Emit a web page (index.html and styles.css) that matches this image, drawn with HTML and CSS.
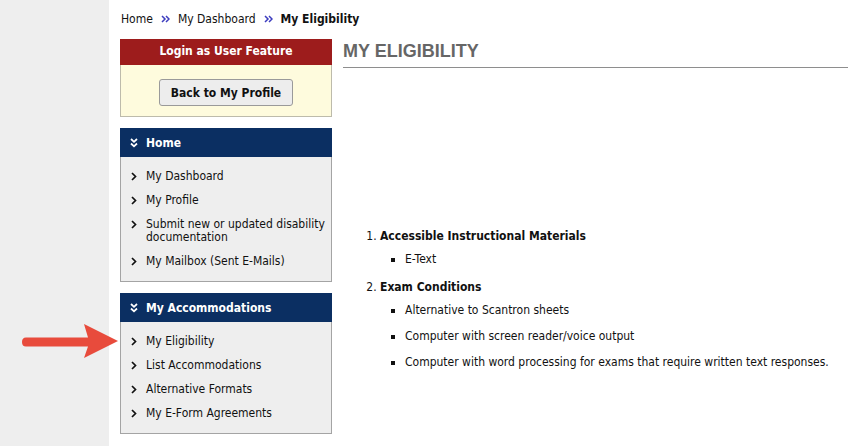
FILE: index.html
```html
<!DOCTYPE html>
<html>
<head>
<meta charset="utf-8">
<link rel="stylesheet" href="styles.css">
</head>
<body>
<div class="page">
  <div class="strip">
    <svg class="pointer" width="100" height="36" viewBox="0 0 100 36">
      <path d="M4 14.5 L66 14.5 L62 1 L96 18 L62 35 L66 23.5 L4 23.5 Q0 23.5 0 19 Q0 14.5 4 14.5 Z" fill="#e84b3c"/>
    </svg>
  </div>
  <div class="content">
    <div class="crumbs">
      <span>Home</span><svg class="sep" width="9" height="8" viewBox="0 0 9 8"><path d="M1 1 L4 4 L1 7 M5 1 L8 4 L5 7" fill="none" stroke="#3d3dbf" stroke-width="1.5"/></svg><span>My Dashboard</span><svg class="sep" width="9" height="8" viewBox="0 0 9 8"><path d="M1 1 L4 4 L1 7 M5 1 L8 4 L5 7" fill="none" stroke="#3d3dbf" stroke-width="1.5"/></svg><b>My Eligibility</b>
    </div>
    <div class="cols">
      <aside class="sidebar">
        <div class="box login">
          <div class="login-head">Login as User Feature</div>
          <div class="login-body"><button class="btn">Back to My Profile</button></div>
        </div>
        <div class="box nav">
          <div class="nav-head">
            <svg class="dchev" width="8" height="10" viewBox="0 0 8 10"><path d="M1 1 L4 3.8 L7 1 M1 5.5 L4 8.3 L7 5.5" fill="none" stroke="#fff" stroke-width="1.8"/></svg>
            <span>Home</span>
          </div>
          <ul class="nav-list">
            <li><svg class="chev" width="6" height="9" viewBox="0 0 6 9"><path d="M1 1 L4.5 4.5 L1 8" fill="none" stroke="#111" stroke-width="1.7"/></svg><span>My Dashboard</span></li>
            <li><svg class="chev" width="6" height="9" viewBox="0 0 6 9"><path d="M1 1 L4.5 4.5 L1 8" fill="none" stroke="#111" stroke-width="1.7"/></svg><span>My Profile</span></li>
            <li><svg class="chev" width="6" height="9" viewBox="0 0 6 9"><path d="M1 1 L4.5 4.5 L1 8" fill="none" stroke="#111" stroke-width="1.7"/></svg><span>Submit new or updated disability documentation</span></li>
            <li><svg class="chev" width="6" height="9" viewBox="0 0 6 9"><path d="M1 1 L4.5 4.5 L1 8" fill="none" stroke="#111" stroke-width="1.7"/></svg><span>My Mailbox (Sent E-Mails)</span></li>
          </ul>
        </div>
        <div class="box nav">
          <div class="nav-head">
            <svg class="dchev" width="8" height="10" viewBox="0 0 8 10"><path d="M1 1 L4 3.8 L7 1 M1 5.5 L4 8.3 L7 5.5" fill="none" stroke="#fff" stroke-width="1.8"/></svg>
            <span>My Accommodations</span>
          </div>
          <ul class="nav-list">
            <li><svg class="chev" width="6" height="9" viewBox="0 0 6 9"><path d="M1 1 L4.5 4.5 L1 8" fill="none" stroke="#111" stroke-width="1.7"/></svg><span>My Eligibility</span></li>
            <li><svg class="chev" width="6" height="9" viewBox="0 0 6 9"><path d="M1 1 L4.5 4.5 L1 8" fill="none" stroke="#111" stroke-width="1.7"/></svg><span>List Accommodations</span></li>
            <li><svg class="chev" width="6" height="9" viewBox="0 0 6 9"><path d="M1 1 L4.5 4.5 L1 8" fill="none" stroke="#111" stroke-width="1.7"/></svg><span>Alternative Formats</span></li>
            <li><svg class="chev" width="6" height="9" viewBox="0 0 6 9"><path d="M1 1 L4.5 4.5 L1 8" fill="none" stroke="#111" stroke-width="1.7"/></svg><span>My E-Form Agreements</span></li>
          </ul>
        </div>
      </aside>
      <main class="main">
        <h1 class="title">MY ELIGIBILITY</h1>
        <ol class="elig">
          <li><b>Accessible Instructional Materials</b>
            <ul class="subs">
              <li>E-Text</li>
            </ul>
          </li>
          <li><b>Exam Conditions</b>
            <ul class="subs">
              <li>Alternative to Scantron sheets</li>
              <li>Computer with screen reader/voice output</li>
              <li>Computer with word processing for exams that require written text responses.</li>
            </ul>
          </li>
        </ol>
      </main>
    </div>
  </div>
</div>
</body>
</html>
```

FILE: styles.css
```css
html, body {
  margin: 0;
  padding: 0;
  background: #fff;
}
body {
  font-family: "DejaVu Sans Condensed", "DejaVu Sans", sans-serif;
  font-stretch: condensed;
  font-size: 12px;
  color: #111;
}
.page {
  display: flex;
  min-height: 446px;
}
.strip {
  width: 109px;
  flex: none;
  background: #eeeeee;
  position: relative;
}
.pointer {
  position: absolute;
  left: 22px;
  top: 323px;
}
.content {
  flex: 1;
  padding-left: 11px;
  padding-right: 16px;
}
.crumbs {
  height: 39px;
  padding-left: 1px;
  display: flex;
  align-items: center;
  font-size: 12px;
  padding-bottom: 1px;
  box-sizing: border-box;
}
.crumbs .sep {
  margin: 0 8px 0 8px;
  flex: none;
}
.crumbs b {
  font-weight: bold;
}
.cols {
  display: flex;
  gap: 11px;
  align-items: flex-start;
}
.sidebar {
  width: 212px;
  flex: none;
  display: flex;
  flex-direction: column;
  gap: 11px;
}
.box {
  border: 1px solid #a8a8a8;
  box-sizing: border-box;
}
.login {
  border-color: #bdbbab;
}
.login-head {
  background: #9d1c1c;
  color: #fff;
  font-weight: bold;
  text-align: center;
  height: 26px;
  line-height: 25px;
  margin: -1px -1px 0;
}
.login-body {
  background: #fefbdd;
  display: flex;
  justify-content: center;
  padding: 14px 0 10px;
}
.btn {
  font-family: inherit;
  font-stretch: condensed;
  font-size: 12px;
  font-weight: bold;
  color: #111;
  background: #ededed;
  border: 1px solid #9a9a9a;
  border-radius: 3px;
  width: 134px;
  height: 27px;
  padding: 0;
}
.nav {
  background: #eeeeee;
  border-color: #a4a4a4;
}
.nav-head {
  background: #0b2f62;
  color: #fff;
  font-weight: bold;
  height: 29px;
  display: flex;
  align-items: center;
  gap: 8px;
  padding-left: 10px;
  margin: -1px -1px 0;
}
.nav-head .dchev {
  flex: none;
}
.nav-list {
  list-style: none;
  margin: 0;
  padding: 13px 0 13px;
}
.nav-list li {
  display: flex;
  align-items: flex-start;
  gap: 9px;
  padding-left: 10px;
  line-height: 13px;
  margin-bottom: 11px;
}
.nav-list li:last-child {
  margin-bottom: 0;
}
.nav-list .chev {
  flex: none;
  margin-top: 2px;
}
.main {
  flex: 1;
}
.title {
  font-family: "Liberation Sans", Arial, sans-serif;
  font-stretch: normal;
  font-size: 18px;
  font-weight: bold;
  color: #666;
  margin: 0;
  padding-top: 3px;
  height: 25px;
  line-height: 18px;
  border-bottom: 1px solid #8e8e8e;
}
.elig {
  margin: 160px 0 0;
  padding-left: 37px;
}
.elig > li {
  margin-bottom: 12px;
  line-height: 16px;
}
.subs {
  list-style: square;
  padding-left: 25px;
  margin: 7px 0 0;
}
.subs li {
  line-height: 16px;
  margin-bottom: 10px;
}
```
